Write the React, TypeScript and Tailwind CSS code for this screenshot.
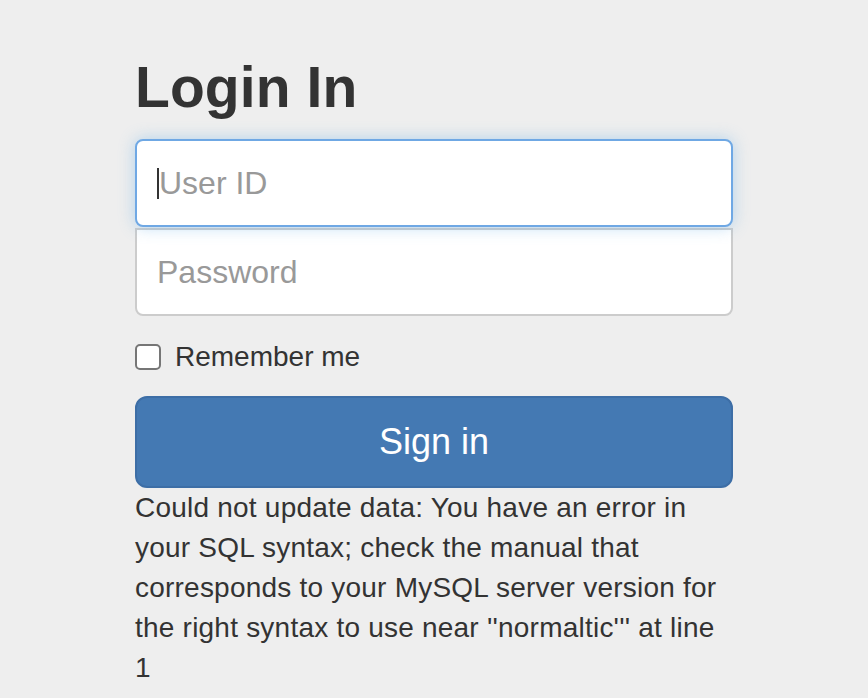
import React from "react";

export default function App() {
  return (
    <div
      className="min-h-[698px] w-full bg-[#eeeeee] text-[#333333]"
      style={{ fontFamily: '"Liberation Sans", Arial, Helvetica, sans-serif' }}
    >
      <div className="mx-auto w-[598px] pt-[54px]">
        <h2 className="m-0 mb-[19px] text-[57px] font-bold leading-[66px] tracking-[0.1px] text-[#333333]">
          Login In
        </h2>
        <div className="flex flex-col">
          <div className="relative z-10 flex h-[88px] items-center rounded-[8px] border-2 border-[#6fa8e4] bg-white px-[20px] shadow-[0_0_16px_rgba(102,175,233,0.45)]">
            <span className="h-[31px] w-[2px] bg-[#333333]"></span>
            <input
              className="h-full w-full bg-transparent text-[32px] text-[#555555] outline-none placeholder:text-[#999999]"
              placeholder="User ID"
              style={{ fontFamily: '"Liberation Sans", Arial, sans-serif' }}
            />
          </div>
          <div className="mt-[1px] flex h-[88px] items-center rounded-b-[8px] border-2 border-[#cccccc] bg-white px-[20px]">
            <input
              className="h-full w-full bg-transparent text-[32px] text-[#555555] outline-none placeholder:text-[#999999]"
              placeholder="Password"
              type="password"
              style={{ fontFamily: '"Liberation Sans", Arial, sans-serif' }}
            />
          </div>
        </div>
        <div className="my-[20px] flex h-[40px] items-center">
          <span className="mr-[14px] mt-[2px] box-border h-[26px] w-[26px] rounded-[5px] border-2 border-[#767676] bg-white"></span>
          <span className="mt-[1px] text-[28px] leading-[40px] text-[#333333]">Remember me</span>
        </div>
        <button className="flex h-[92px] w-full items-center justify-center rounded-[12px] border-2 border-[#3d6ea6] bg-[#4479b3] text-[36px] text-white">
          Sign in
        </button>
        <p className="m-0 text-[28px] leading-[40px] tracking-[0.22px] text-[#333333]">
          Could not update data: You have an error in your SQL syntax; check the manual that corresponds to your MySQL server version for the right syntax to use near ''normaltic''' at line 1
        </p>
      </div>
    </div>
  );
}
